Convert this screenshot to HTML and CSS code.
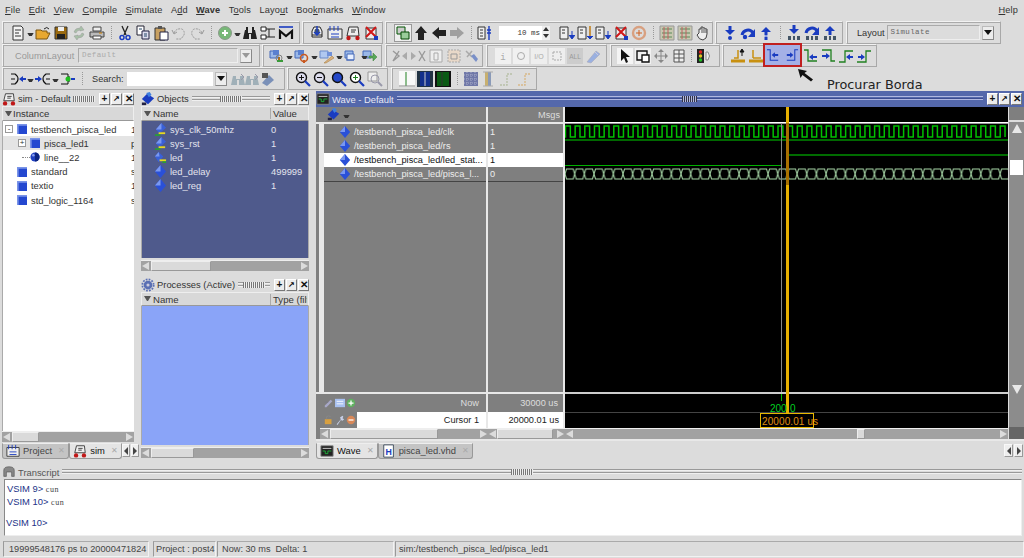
FILE: index.html
```html
<!DOCTYPE html>
<html lang="en">
<head>
    <meta charset="UTF-8">
    <title>ModelSim</title>
    <link rel="stylesheet" href="styles.css">
</head>
<body>
    <svg class="defs" width="0" height="0">
        <defs>
            <symbol id="doc" viewBox="0 0 16 16"><path d="M3 1h8l2 2v12H3z" fill="#f4f4f4" stroke="#333"/><path d="M5 5h6M5 8h4M5 11h6" stroke="#333"/></symbol>
            <symbol id="open" viewBox="0 0 16 16"><path d="M1 5h5l1 1h5v2h3l-3 6H1z" fill="#e8a830" stroke="#7a5410"/><path d="M9 4q3-3 5 0" fill="none" stroke="#222"/></symbol>
            <symbol id="save" viewBox="0 0 16 16"><path d="M2 2h12v12H2z" fill="#9a6a10" stroke="#333"/><path d="M5 2h6v4H5z" fill="#eee"/><path d="M4 9h8v5H4z" fill="#222"/></symbol>
            <symbol id="recycle" viewBox="0 0 16 16"><path d="M3 7q1-4 6-4l1-2 3 4-4 1V5q-3 0-4 3zM13 9q-1 4-6 4l-1 2-3-4 4-1v1q3 0 4-3z" fill="#a8c0a8" stroke="#999" stroke-width=".5"/></symbol>
            <symbol id="print" viewBox="0 0 16 16"><path d="M4 2h8v4H4z" fill="#eee" stroke="#444"/><path d="M1 7h14v5H1z" fill="#bbb" stroke="#444"/><path d="M4 11h8v3H4z" fill="#fff" stroke="#444"/><path d="M10 8h3" stroke="#d08000"/></symbol>
            <symbol id="cut" viewBox="0 0 16 16"><path d="M5 1l4 9M11 1l-4 9" stroke="#222" stroke-width="1.3"/><circle cx="5" cy="12.500" r="2" fill="none" stroke="#1a3cc0" stroke-width="1.500"/><circle cx="11" cy="12.500" r="2" fill="none" stroke="#1a3cc0" stroke-width="1.500"/></symbol>
            <symbol id="copy" viewBox="0 0 16 16"><path d="M2 1h7v9H2z" fill="#fff" stroke="#223"/><path d="M7 6h7v8H7z" fill="#dde" stroke="#224"/><path d="M4 4h3M9 9h3M9 11h3" stroke="#246"/></symbol>
            <symbol id="paste" viewBox="0 0 16 16"><path d="M2 3h10v12H2z" fill="#c8a060" stroke="#333"/><path d="M5 1h4v3H5z" fill="#555"/><path d="M7 7h8v8H7z" fill="#fff" stroke="#224"/></symbol>
            <symbol id="undo" viewBox="0 0 16 16"><path d="M3 8q2-5 8-4 3 2 2 6l-3 4H5" fill="none" stroke="#999" stroke-dasharray="2 1"/><path d="M1 5l2 4 3-2" fill="none" stroke="#999"/></symbol>
            <symbol id="redo" viewBox="0 0 16 16"><path d="M13 8q-2-5-8-4-3 2-2 6l3 4h5" fill="none" stroke="#999" stroke-dasharray="2 1"/><path d="M15 5l-2 4-3-2" fill="none" stroke="#999"/></symbol>
            <symbol id="add" viewBox="0 0 16 16"><circle cx="8" cy="8" r="6.500" fill="#78b878" stroke="#8a9a8a"/><path d="M8 5v6M5 8h6" stroke="#fff" stroke-width="2"/></symbol>
            <symbol id="binoc" viewBox="0 0 16 16"><path d="M1 14l2-9h3v3h4V5h3l2 9H9V9H7v5z" fill="#222"/><path d="M4 2h2v3H4zM10 2h2v3h-2z" fill="#222"/></symbol>
            <symbol id="tree" viewBox="0 0 16 16"><path d="M1 2h5v4H1zM1 10h5v4H1z" fill="#fff" stroke="#222"/><path d="M6 4h9M9 4v8M6 12h9" stroke="#222"/></symbol>
            <symbol id="mbar" viewBox="0 0 16 16"><path d="M1 2h14" stroke="#1a3cc0" stroke-width="1.600"/><path d="M2 14V6l6 5 6-5v8" fill="none" stroke="#111" stroke-width="2.200"/></symbol>
            <symbol id="sim" viewBox="0 0 16 16"><path d="M3 10h10M5 2h6l2 4v6H3V6z" fill="#eee" stroke="#222"/><circle cx="8" cy="6" r="2.500" fill="#456"/><path d="M8 1v9M5 7l3 3 3-3" fill="none" stroke="#1a3cc0" stroke-width="1.400"/></symbol>
            <symbol id="grid" viewBox="0 0 16 16"><path d="M1 4h14v10H1z" fill="#eee" stroke="#333"/><path d="M3 1v5M7 1v5M11 1v5M4 9h8M4 12h8" stroke="#1a3cc0"/></symbol>
            <symbol id="car" viewBox="0 0 16 16"><path d="M4 2h9l1 9H2z" fill="#eee" stroke="#333"/><path d="M6 5h5M6 7h4" stroke="#333"/><circle cx="3.500" cy="13" r="2.200" fill="#c01818"/><circle cx="12.500" cy="13" r="2.200" fill="#c01818"/></symbol>
            <symbol id="xdoc" viewBox="0 0 16 16"><path d="M3 3h10v11H3z" fill="#eee" stroke="#333"/><path d="M3 2l10 10M13 2L3 12" stroke="#d01818" stroke-width="2"/><path d="M11 11h4v4h-4z" fill="#1a3cc0"/></symbol>
            <symbol id="link" viewBox="0 0 16 16"><path d="M2 2h8v7H2z" fill="#ccc" stroke="#050"/><path d="M6 7h8v7H6z" fill="#9c9" stroke="#040"/></symbol>
            <symbol id="up" viewBox="0 0 16 16"><path d="M8 1l6 7h-3v7H5V8H2z" fill="#222"/></symbol>
            <symbol id="left" viewBox="0 0 16 16"><path d="M1 8l7-6v3h7v6H8v3z" fill="#222"/></symbol>
            <symbol id="right" viewBox="0 0 16 16"><path d="M15 8L8 2v3H1v6h7v3z" fill="#a0a0a0"/></symbol>
            <symbol id="ruler" viewBox="0 0 16 16"><path d="M1 2h7v12H1z" fill="#eee" stroke="#333"/><path d="M3 5h3M3 8h3M3 11h3" stroke="#333"/><path d="M12 1v14M10 5h4M10 8h4" stroke="#1a3cc0" stroke-width="1.400"/></symbol>
            <symbol id="rundown" viewBox="0 0 16 16"><path d="M1 2h8v12H1z" fill="#eee" stroke="#333"/><path d="M3 5h3M3 8h3" stroke="#333"/><path d="M13 6v7M10 10l3 4 3-4" fill="#1a3cc0" stroke="#1a3cc0"/></symbol>
            <symbol id="runmid" viewBox="0 0 16 16"><path d="M1 2h8v12H1z" fill="#eee" stroke="#333"/><path d="M3 5h3M3 8h3" stroke="#333"/><path d="M13 1v13" stroke="#c08020" stroke-width="1.600"/><path d="M10 11l3 3 3-3" fill="#1a3cc0" stroke="#1a3cc0"/></symbol>
            <symbol id="stop" viewBox="0 0 16 16"><circle cx="8" cy="8" r="6" fill="none" stroke="#d8a080" stroke-width="2.400"/><path d="M5 8h6M8 5v6" stroke="#d06020"/></symbol>
            <symbol id="wavegrid" viewBox="0 0 16 16"><path d="M1 1h14v14H1z" fill="#c8c8b0" stroke="#999"/><path d="M3 4h10M3 8h10M3 12h10" stroke="#5a8a5a"/><path d="M5 2v12M9 2v12" stroke="#c06060"/></symbol>
            <symbol id="hand" viewBox="0 0 16 16"><path d="M4 8V4h2V2h2v1h2v1h2v5q0 5-4 6-4 0-6-5z" fill="#eee" stroke="#444"/><path d="M7 3v5M9 4v4M11 5v3" stroke="#555"/></symbol>
            <symbol id="stepin" viewBox="0 0 16 16"><path d="M8 1v5" stroke="#1a3cc0" stroke-width="3"/><path d="M3 5h10l-5 5z" fill="#1a3cc0"/><circle cx="8" cy="13" r="2" fill="#1a3cc0"/></symbol>
            <symbol id="stepover" viewBox="0 0 16 16"><path d="M2 10a6 6 0 0 1 11-2" fill="none" stroke="#1a3cc0" stroke-width="3"/><path d="M15 4v8h-7z" fill="#1a3cc0"/><circle cx="5" cy="12" r="2.200" fill="#1a3cc0"/></symbol>
            <symbol id="stepout" viewBox="0 0 16 16"><path d="M8 15V6" stroke="#1a3cc0" stroke-width="3"/><path d="M3 7h10L8 2z" fill="#1a3cc0"/><path d="M6 11h4" stroke="#fff"/></symbol>
            <symbol id="stepinb" viewBox="0 0 16 16"><path d="M8 0v5" stroke="#1a3cc0" stroke-width="3"/><path d="M3 4h10l-5 5z" fill="#1a3cc0"/><path d="M2 11h3v4H2zM7 11h2v4H7zM11 11h3v4h-3z" fill="#456"/></symbol>
            <symbol id="stepoverb" viewBox="0 0 16 16"><path d="M2 8a6 6 0 0 1 11-2" fill="none" stroke="#1a3cc0" stroke-width="3"/><path d="M15 2v8H8z" fill="#1a3cc0"/><path d="M2 11h3v4H2zM7 11h2v4H7zM11 11h3v4h-3z" fill="#456"/></symbol>
            <symbol id="stepoutb" viewBox="0 0 16 16"><path d="M8 10V5" stroke="#1a3cc0" stroke-width="3"/><path d="M3 6h10L8 1z" fill="#1a3cc0"/><path d="M2 11h3v4H2zM7 11h2v4H7zM11 11h3v4h-3z" fill="#456"/></symbol>
            <symbol id="lay1" viewBox="0 0 16 16"><path d="M1 3h8v7H1z" fill="#9ab8e8" stroke="#4468b8"/><path d="M4 2h6v5H4z" fill="#5a80d0"/><path d="M10 9v5" stroke="#a87020" stroke-width="2"/><circle cx="10" cy="10" r="3" fill="none" stroke="#808080"/><path d="M8 13h6" stroke="#3a9a3a" stroke-width="2"/></symbol>
            <symbol id="lay2" viewBox="0 0 16 16"><path d="M1 3h8v7H1z" fill="#9ab8e8" stroke="#4468b8"/><path d="M4 2h6v5H4z" fill="#5a80d0"/><circle cx="10" cy="10" r="3.500" fill="none" stroke="#c85820" stroke-width="1.600"/><path d="M10 12v3" stroke="#c85820" stroke-width="2"/></symbol>
            <symbol id="lay3" viewBox="0 0 16 16"><path d="M1 3h8v7H1z" fill="#b0c8f0" stroke="#6a8ac8"/><path d="M8 4h5v4H8z" fill="#7090d8"/><path d="M5 15l8-7 2 2-8 5z" fill="#d8b080" stroke="#a07838" stroke-width=".5"/></symbol>
            <symbol id="lay4" viewBox="0 0 16 16"><path d="M1 3h8v7H1z" fill="#9ab8e8" stroke="#4468b8"/><path d="M3 6h7v6H3z" fill="#e8f0ff" stroke="#4468b8"/><path d="M2 12h8" stroke="#4468b8"/></symbol>
            <symbol id="lay5" viewBox="0 0 16 16"><path d="M1 3h8v7H1z" fill="#9ab8e8" stroke="#4468b8"/><path d="M7 8h4V5l4 4-4 4v-3H7z" fill="#58a858" stroke="#3a7a3a" stroke-width=".5"/></symbol>
            <symbol id="crossl" viewBox="0 0 16 16"><path d="M1 3l6 5-6 5M7 3L1 13" fill="none" stroke="#999" stroke-width="1.400"/><path d="M15 4l-5 4 5 4z" fill="#aaa"/></symbol>
            <symbol id="crossr" viewBox="0 0 16 16"><path d="M9 3l6 10M15 3L9 13" fill="none" stroke="#999" stroke-width="1.400"/><path d="M1 4l5 4-5 4z" fill="#aaa"/></symbol>
            <symbol id="box1" viewBox="0 0 16 16"><path d="M2 2h12v12H2z" fill="#eee" stroke="#aaa"/><path d="M6 5h4v7H6z" fill="none" stroke="#aaa"/></symbol>
            <symbol id="box2" viewBox="0 0 16 16"><path d="M2 2h12v12H2z" fill="#e8d8c8" stroke="#aaa" stroke-dasharray="2 1"/><path d="M5 6h6v5H5z" fill="none" stroke="#999"/></symbol>
            <symbol id="tool" viewBox="0 0 16 16"><path d="M2 3l6 6M8 3L3 9" stroke="#aaa" stroke-width="1.500"/><path d="M7 8l3-2 4 5-2 3z" fill="#7a90c8"/></symbol>
            <symbol id="btni" viewBox="0 0 16 16"><path d="M0 0h16v16H0z" fill="#f0f0f0"/><text x="8" y="12" font-size="9" text-anchor="middle" fill="#aaa" font-family="Liberation Mono">i</text></symbol>
            <symbol id="btno" viewBox="0 0 16 16"><path d="M0 0h16v16H0z" fill="#f0f0f0"/><circle cx="8" cy="8" r="3.500" fill="none" stroke="#aaa"/></symbol>
            <symbol id="btnio" viewBox="0 0 16 16"><path d="M0 0h16v16H0z" fill="#eee"/><text x="8" y="11" font-size="7" text-anchor="middle" fill="#aaa" font-family="Liberation Sans">I/O</text></symbol>
            <symbol id="btnb" viewBox="0 0 16 16"><path d="M0 0h16v16H0z" fill="#eee"/><path d="M4 4h8v8H4z" fill="none" stroke="#aaa" stroke-dasharray="2 1"/></symbol>
            <symbol id="btnall" viewBox="0 0 16 16"><path d="M0 0h16v16H0z" fill="#ccc"/><text x="8" y="11" font-size="6.500" text-anchor="middle" fill="#999" font-family="Liberation Sans">ALL</text></symbol>
            <symbol id="pen" viewBox="0 0 16 16"><path d="M2 14l9-11 4 3-9 9z" fill="#9ab0e0" stroke="#aab" stroke-width=".6"/><path d="M10 4l3 3" stroke="#ccd"/></symbol>
            <symbol id="cursor" viewBox="0 0 16 16"><path d="M0 0h16v16H0z" fill="#f4f4f4"/><path d="M4 1v12l3-3 2 5 2-1-2-5h4z" fill="#111"/></symbol>
            <symbol id="zoombox" viewBox="0 0 16 16"><path d="M0 0h16v16H0z" fill="#f0f0f0"/><path d="M2 3h10v9H2z" fill="none" stroke="#111" stroke-width="1.400"/><path d="M7 7h7v7H7z" fill="#fff" stroke="#111" stroke-width="1.400"/></symbol>
            <symbol id="move" viewBox="0 0 16 16"><path d="M8 1l3 3H5zM8 15l-3-3h6zM1 8l3-3v6zM15 8l-3 3V5z" fill="#888"/><path d="M3 8h10M8 3v10" stroke="#888"/></symbol>
            <symbol id="cols" viewBox="0 0 16 16"><path d="M3 2h10v12H3z" fill="#eee" stroke="#555"/><path d="M8 2v12M3 6h10M3 10h10" stroke="#555"/></symbol>
            <symbol id="traffic" viewBox="0 0 16 16"><path d="M1 1h7v14H1z" fill="#222"/><circle cx="4.500" cy="4" r="1.700" fill="#e02020"/><circle cx="4.500" cy="8" r="1.700" fill="#e0c020"/><circle cx="4.500" cy="12" r="1.700" fill="#20c020"/><path d="M10 4h2q3 4 0 8h-2z" fill="#eee" stroke="#888"/></symbol>
            <symbol id="edgeupl" viewBox="0 0 16 16"><path d="M1 13h14" stroke="#c89010" stroke-width="3"/><path d="M4 10h4V2" fill="none" stroke="#c89010" stroke-width="1.500"/><path d="M12 1l-2 3h4zM12 4v4" fill="#111" stroke="#111"/></symbol>
            <symbol id="edgedn" viewBox="0 0 16 16"><path d="M1 13h14" stroke="#c89010" stroke-width="3"/><path d="M5 10V2M5 10h8" fill="none" stroke="#c89010" stroke-width="1.500"/></symbol>
            <symbol id="findl" viewBox="0 0 16 16"><path d="M1 2.500h3.500v11H13" fill="none" stroke="#1a3cc0" stroke-width="1.100"/><path d="M6 8l3.500-3v2H13v2H9.500v2z" fill="#1a3cc0"/></symbol>
            <symbol id="findr" viewBox="0 0 16 16"><path d="M15 2.500h-3.500v11H3" fill="none" stroke="#1a3cc0" stroke-width="1.100"/><path d="M10 8L6.500 5v2H3v2h3.500v2z" fill="#1a3cc0"/></symbol>
            <symbol id="gfall" viewBox="0 0 16 16"><path d="M2 2h4v11h9" fill="none" stroke="#208020" stroke-width="1.300"/><path d="M7 9l4-3v2h4v2h-4v2z" fill="#1a3cc0"/></symbol>
            <symbol id="grise" viewBox="0 0 16 16"><path d="M2 2h9v11h4" fill="none" stroke="#208020" stroke-width="1.300"/><path d="M10 8L6 5v2H2v2h4v2z" fill="#1a3cc0"/></symbol>
            <symbol id="grise2" viewBox="0 0 16 16"><path d="M1 14h6V3h8" fill="none" stroke="#208020" stroke-width="1.300"/><path d="M8 9l4-3v2h3v2h-3v2z" fill="#1a3cc0"/></symbol>
            <symbol id="grise3" viewBox="0 0 16 16"><path d="M1 14h9V3h5" fill="none" stroke="#208020" stroke-width="1.300"/><path d="M9 9L5 6v2H2v2h3v2z" fill="#1a3cc0"/></symbol>
            <symbol id="addin" viewBox="0 0 16 16"><path d="M1 3h4q3 2 3 5t-3 5H1M5 8H1" fill="none" stroke="#111" stroke-width="1.200"/><path d="M9 8l4-3v2h3v2h-3v2z" fill="#1a3cc0"/></symbol>
            <symbol id="addout" viewBox="0 0 16 16"><path d="M15 3h-4q-3 2-3 5t3 5h4M11 8h4" fill="none" stroke="#111" stroke-width="1.200"/><path d="M7 8L3 5v2H0v2h3v2z" fill="#1a3cc0"/></symbol>
            <symbol id="addgate" viewBox="0 0 16 16"><path d="M1 3h7v10H1M8 6h2M8 10h2" fill="none" stroke="#111"/><circle cx="8" cy="8" r="2.500" fill="#20c020"/><path d="M11 8h4" stroke="#1a3cc0" stroke-width="2"/></symbol>
            <symbol id="binocg" viewBox="0 0 16 16"><path d="M1 14l2-9h3v3h4V5h3l2 9H9V9H7v5z" fill="#a0b0b8"/><path d="M11 3l3 3-3 3" fill="none" stroke="#99a"/></symbol>
            <symbol id="binoct" viewBox="0 0 16 16"><path d="M2 12l7-8 5 5-7 6z" fill="#7a90b8"/><path d="M2 2h6v5H2z" fill="#555"/></symbol>
            <symbol id="zoomin" viewBox="0 0 16 16"><circle cx="6.500" cy="6.500" r="5" fill="#dde" stroke="#111" stroke-width="1.400"/><path d="M10 10l5 5" stroke="#1a3cc0" stroke-width="2.200"/><path d="M4 6.500h5M6.500 4v5" stroke="#111"/></symbol>
            <symbol id="zoomout" viewBox="0 0 16 16"><circle cx="6.500" cy="6.500" r="5" fill="#dde" stroke="#111" stroke-width="1.400"/><path d="M10 10l5 5" stroke="#1a3cc0" stroke-width="2.200"/><path d="M4 6.500h5" stroke="#111"/></symbol>
            <symbol id="zoomfull" viewBox="0 0 16 16"><circle cx="6.500" cy="6.500" r="5" fill="#2448c8" stroke="#111" stroke-width="1.400"/><path d="M10 10l5 5" stroke="#1a3cc0" stroke-width="2.200"/></symbol>
            <symbol id="zoomgreen" viewBox="0 0 16 16"><circle cx="6.500" cy="6.500" r="5" fill="#fff" stroke="#111" stroke-width="1.400"/><path d="M10 10l5 5" stroke="#1a3cc0" stroke-width="2.200"/><path d="M4 6.500h5M6.500 4v5" stroke="#208020"/></symbol>
            <symbol id="zoomgrey" viewBox="0 0 16 16"><path d="M1 1h9v9H1z" fill="#eee" stroke="#999"/><circle cx="8" cy="8" r="4" fill="none" stroke="#99a"/><path d="M11 11l4 4" stroke="#99a" stroke-width="2"/></symbol>
            <symbol id="panew" viewBox="0 0 16 16"><path d="M0 0h16v16H0z" fill="#f8f8f8"/><path d="M7 1v14" stroke="#208020"/><path d="M0 15h16" stroke="#888"/></symbol>
            <symbol id="paneb" viewBox="0 0 16 16"><path d="M0 0h16v16H0z" fill="#234"/><path d="M3 1h10v14H3z" fill="#14308c"/><path d="M8 1v14" stroke="#ccc"/></symbol>
            <symbol id="paneg" viewBox="0 0 16 16"><path d="M0 0h16v16H0z" fill="#111"/><path d="M2 1h12v14H2z" fill="#0a5a14"/><path d="M7 1v14" stroke="#333"/></symbol>
            <symbol id="dither" viewBox="0 0 16 16"><path d="M1 1h14v14H1z" fill="#7078a8"/><path d="M1 4h14M1 8h14M1 12h14M4 1v14M8 1v14M12 1v14" stroke="#a8acc8" stroke-dasharray="1 1"/></symbol>
            <symbol id="wedge1" viewBox="0 0 16 16"><path d="M4 1h3v14H4z" fill="#c8b070"/><path d="M7 1h3v14H7z" fill="#8a9ab8"/><path d="M2 1h10M2 15h10" stroke="#aaa"/></symbol>
            <symbol id="wedge2" viewBox="0 0 16 16"><path d="M1 14h7V3h6" fill="none" stroke="#b8c0a8" stroke-dasharray="2 1" stroke-width="1.400"/></symbol>
            <symbol id="wedge3" viewBox="0 0 16 16"><path d="M1 14h7V3h6" fill="none" stroke="#d8b888" stroke-dasharray="2 1" stroke-width="1.400"/></symbol>
            <symbol id="simhead" viewBox="0 0 16 16"><path d="M4 2h9l1 8H2z" fill="#eee" stroke="#333"/><path d="M6 5h5M6 7h4" stroke="#333"/><circle cx="3.500" cy="13" r="2.500" fill="#c01818"/><circle cx="12.500" cy="13" r="2.500" fill="#c01818"/></symbol>
            <symbol id="objhead" viewBox="0 0 16 16"><path d="M1 8l6-6 8 5-7 7z" fill="#1a3cc0"/><path d="M6 1l4-1 2 3-3 3z" fill="#4080e0"/><path d="M1 12h5v3H1z" fill="#224"/></symbol>
            <symbol id="gear" viewBox="0 0 16 16"><circle cx="8" cy="8" r="5" fill="#5a6fb4"/><circle cx="8" cy="8" r="6.500" fill="none" stroke="#5a6fb4" stroke-width="2" stroke-dasharray="2 1.400"/><circle cx="8" cy="8" r="1.800" fill="#ccd"/></symbol>
            <symbol id="wavehead" viewBox="0 0 16 16"><path d="M1 2h14v12H1z" fill="#222" stroke="#888"/><path d="M3 5h10" stroke="#ddd"/><path d="M3 8h3v3h3V8h4" fill="none" stroke="#1eb83a"/></symbol>
            <symbol id="vhd" viewBox="0 0 16 16"><path d="M2 1h11v14H2z" fill="#fff" stroke="#345"/><text x="7.500" y="12" font-size="10" text-anchor="middle" font-weight="bold" fill="#1a3cc0" font-family="Liberation Sans">H</text></symbol>
            <symbol id="chat" viewBox="0 0 16 16"><path d="M2 13V6q0-4 6-4t6 4v7h-3V8H5v5z" fill="#888" stroke="#444" stroke-width=".6"/></symbol>
            <symbol id="inst" viewBox="0 0 12 12"><path d="M0 0h12v12H0z" fill="#2448d0"/><path d="M0 0h12v2H2v10H0z" fill="#7a94e8"/></symbol>
            <symbol id="ball" viewBox="0 0 12 12"><circle cx="6" cy="6" r="5.500" fill="#2040c0"/><path d="M6 .5a5.500 5.500 0 0 1 0 11" fill="#0c2480"/><circle cx="4" cy="4" r="1.500" fill="#8aa0f0"/></symbol>
            <symbol id="dia" viewBox="0 0 14 14"><path d="M7 0l6 7-6 7-6-7z" fill="#2a50d8"/><path d="M7 0L1 7h6z" fill="#7a98f0"/></symbol>
            <symbol id="diaio" viewBox="0 0 14 14"><path d="M8 0l5 5-7 6-4-4z" fill="#3a60d8"/><path d="M8 0L2 7h6z" fill="#7a98f0"/><path d="M5 11h7" stroke="#e8d820" stroke-width="2"/><path d="M1 13h6" stroke="#20b020" stroke-width="1.500"/></symbol>
            <symbol id="diaout" viewBox="0 0 14 14"><path d="M5 1l5 5-5 6-4-6z" fill="#3a60d8"/><path d="M5 1L1 6h5z" fill="#7a98f0"/><path d="M6 10h7" stroke="#e8d820" stroke-width="2"/><path d="M9 12h4" stroke="#20b020" stroke-width="1.500"/></symbol>
            <symbol id="lock" viewBox="0 0 12 12"><path d="M1 5h8v6H1z" fill="#d8a040"/><path d="M3 5V2q3-2 5 0" fill="none" stroke="#888"/></symbol>
            <symbol id="wrench" viewBox="0 0 12 12"><path d="M2 11l5-6-1-2 3-2 1 1-1 2 2 1-2 2-2-1-4 6z" fill="#c8d0e8"/></symbol>
            <symbol id="minus" viewBox="0 0 12 12"><circle cx="6" cy="6" r="5" fill="#d88858"/><path d="M3 6h6" stroke="#fff" stroke-width="1.500"/></symbol>
            <symbol id="edit" viewBox="0 0 12 12"><path d="M1 9l7-7 2 2-7 7H1z" fill="#a8a8c8"/><path d="M1 5h4" stroke="#778"/></symbol>
            <symbol id="window" viewBox="0 0 12 12"><path d="M0 1h12v10H0z" fill="#a8c0f0"/><path d="M2 4h8M2 7h8" stroke="#fff"/></symbol>
            <symbol id="plusc" viewBox="0 0 12 12"><circle cx="6" cy="6" r="5" fill="#60b060"/><path d="M3 6h6M6 3v6" stroke="#fff" stroke-width="1.500"/></symbol>
        </defs>
    </svg>

    <div class="menubar">
        <span><u>F</u>ile</span>
        <span><u>E</u>dit</span>
        <span><u>V</u>iew</span>
        <span><u>C</u>ompile</span>
        <span><u>S</u>imulate</span>
        <span>A<u>d</u>d</span>
        <span class="menu-current"><u>W</u>ave</span>
        <span>T<u>o</u>ols</span>
        <span>Layo<u>u</u>t</span>
        <span>Boo<u>k</u>marks</span>
        <span><u>W</u>indow</span>
        <span class="menu-help"><u>H</u>elp</span>
    </div>

    <div class="toolrow">
        <div class="group g-file">
            <svg class="ic"><use href="#doc"/></svg><i class="drop"></i>
            <svg class="ic"><use href="#open"/></svg>
            <svg class="ic"><use href="#save"/></svg>
            <svg class="ic"><use href="#recycle"/></svg>
            <svg class="ic"><use href="#print"/></svg>
            <i class="sep"></i>
            <svg class="ic"><use href="#cut"/></svg>
            <svg class="ic"><use href="#copy"/></svg>
            <svg class="ic"><use href="#paste"/></svg>
            <svg class="ic"><use href="#undo"/></svg>
            <svg class="ic"><use href="#redo"/></svg>
            <i class="sep"></i>
            <svg class="ic"><use href="#add"/></svg><i class="drop"></i>
            <svg class="ic"><use href="#binoc"/></svg>
            <svg class="ic"><use href="#tree"/></svg>
            <svg class="ic"><use href="#mbar"/></svg>
        </div>
        <div class="group g-sim">
            <svg class="ic"><use href="#sim"/></svg>
            <svg class="ic"><use href="#grid"/></svg>
            <svg class="ic"><use href="#car"/></svg>
            <svg class="ic"><use href="#xdoc"/></svg>
        </div>
        <div class="group g-run">
            <svg class="ic pressed"><use href="#link"/></svg>
            <svg class="ic"><use href="#up"/></svg>
            <svg class="ic"><use href="#left"/></svg>
            <svg class="ic"><use href="#right"/></svg>
            <i class="sep"></i>
            <svg class="ic"><use href="#ruler"/></svg>
            <span class="runlen">10 ms</span>
            <span class="spin"><i></i><i></i></span>
            <svg class="ic"><use href="#rundown"/></svg>
            <svg class="ic"><use href="#runmid"/></svg>
            <svg class="ic"><use href="#rundown"/></svg>
            <svg class="ic"><use href="#xdoc"/></svg>
            <svg class="ic"><use href="#stop"/></svg>
            <i class="sep"></i>
            <svg class="ic"><use href="#wavegrid"/></svg>
            <svg class="ic"><use href="#wavegrid"/></svg>
            <svg class="ic"><use href="#hand"/></svg>
        </div>
        <div class="group g-step">
            <svg class="ic"><use href="#stepin"/></svg>
            <svg class="ic"><use href="#stepover"/></svg>
            <svg class="ic"><use href="#stepout"/></svg>
            <i class="sep"></i>
            <svg class="ic"><use href="#stepinb"/></svg>
            <svg class="ic"><use href="#stepoverb"/></svg>
            <svg class="ic"><use href="#stepoutb"/></svg>
        </div>
        <div class="group g-layout">
            <span class="tlabel">Layout</span>
            <span class="combo combo-sim">Simulate</span>
            <span class="combo-btn"><i></i></span>
        </div>
    </div>

    <div class="toolrow">
        <div class="group g-column">
            <span class="tlabel muted col-label">ColumnLayout</span>
            <span class="combo combo-col">Default</span>
            <span class="combo-btn off"><i></i></span>
        </div>
        <div class="group g-lay">
            <svg class="ic"><use href="#lay1"/></svg><i class="drop"></i>
            <svg class="ic"><use href="#lay2"/></svg><i class="drop"></i>
            <svg class="ic"><use href="#lay3"/></svg><i class="drop"></i>
            <svg class="ic"><use href="#lay4"/></svg><i class="drop drop-tight"></i>
            <svg class="ic"><use href="#lay5"/></svg>
        </div>
        <div class="group g-cross">
            <svg class="ic"><use href="#crossl"/></svg>
            <svg class="ic"><use href="#crossr"/></svg>
            <svg class="ic"><use href="#box1"/></svg>
            <svg class="ic"><use href="#box2"/></svg>
            <svg class="ic"><use href="#tool"/></svg>
        </div>
        <div class="group g-filter">
            <svg class="ic"><use href="#btni"/></svg>
            <svg class="ic"><use href="#btno"/></svg>
            <svg class="ic"><use href="#btnio"/></svg>
            <svg class="ic"><use href="#btnb"/></svg>
            <svg class="ic"><use href="#btnall"/></svg>
            <svg class="ic"><use href="#pen"/></svg>
        </div>
        <div class="group g-mouse">
            <svg class="ic"><use href="#cursor"/></svg>
            <svg class="ic"><use href="#zoombox"/></svg>
            <svg class="ic"><use href="#move"/></svg>
            <svg class="ic"><use href="#cols"/></svg>
            <i class="sep sep-small"></i>
            <svg class="ic"><use href="#traffic"/></svg>
        </div>
        <div class="group g-edge">
            <svg class="ic"><use href="#edgeupl"/></svg>
            <svg class="ic"><use href="#edgedn"/></svg>
            <div class="hilite">
                <svg class="ic"><use href="#findl"/></svg>
                <svg class="ic"><use href="#findr"/></svg>
            </div>
            <svg class="ic"><use href="#gfall"/></svg>
            <svg class="ic"><use href="#grise"/></svg>
            <svg class="ic"><use href="#grise2"/></svg>
            <svg class="ic"><use href="#grise3"/></svg>
        </div>
    </div>

    <div class="toolrow">
        <div class="group g-search">
            <svg class="ic"><use href="#addin"/></svg><i class="drop"></i>
            <svg class="ic"><use href="#addout"/></svg><i class="drop"></i>
            <svg class="ic"><use href="#addgate"/></svg>
            <i class="sep"></i>
            <span class="tlabel search-label">Search:</span>
            <span class="search-box"></span>
            <span class="combo-btn"><i></i></span>
            <svg class="ic tight first"><use href="#binocg"/></svg>
            <svg class="ic tight"><use href="#binocg"/></svg>
            <svg class="ic"><use href="#binoct"/></svg>
        </div>
        <div class="group g-zoom">
            <svg class="ic"><use href="#zoomin"/></svg>
            <svg class="ic"><use href="#zoomout"/></svg>
            <svg class="ic"><use href="#zoomfull"/></svg>
            <svg class="ic"><use href="#zoomgreen"/></svg>
            <svg class="ic"><use href="#zoomgrey"/></svg>
        </div>
        <div class="group g-panes">
            <svg class="ic"><use href="#panew"/></svg>
            <svg class="ic"><use href="#paneb"/></svg>
            <svg class="ic"><use href="#paneg"/></svg>
            <i class="sep"></i>
            <svg class="ic"><use href="#dither"/></svg>
            <svg class="ic"><use href="#wedge1"/></svg>
            <svg class="ic"><use href="#wedge2"/></svg>
            <svg class="ic"><use href="#wedge3"/></svg>
        </div>
    </div>

    <div class="main">
        <div class="col-left">
            <div class="pane-title">
                <svg class="head-ic"><use href="#simhead"/></svg>
                <span>sim - Default</span>
                <i class="grip"></i>
                <span class="winbtn">+</span><span class="winbtn small">&#8599;</span><span class="winbtn">&#10005;</span>
            </div>
            <div class="col-head">
                <i class="sortbtn"></i><span class="h-instance">Instance</span>
            </div>
            <div class="tree">
                <div class="tree-row"><i class="expander">-</i><svg class="tic"><use href="#inst"/></svg><span>testbench_pisca_led</span><b>1</b></div>
                <div class="tree-row sel lvl1"><i class="expander">+</i><svg class="tic"><use href="#inst"/></svg><span>pisca_led1</span><b>p</b></div>
                <div class="tree-row lvl2"><i class="elbow"></i><svg class="tic"><use href="#ball"/></svg><span>line__22</span><b>1</b></div>
                <div class="tree-row root"><svg class="tic"><use href="#inst"/></svg><span>standard</span><b>s</b></div>
                <div class="tree-row root"><svg class="tic"><use href="#inst"/></svg><span>textio</span><b>1</b></div>
                <div class="tree-row root"><svg class="tic"><use href="#inst"/></svg><span>std_logic_1164</span><b>s</b></div>
            </div>
            <div class="hscroll hs-left"><i class="arrow-l"></i><i class="thumb"></i><i class="track"></i><i class="arrow-r"></i></div>
            <div class="tabs">
                <span class="tab"><svg class="tab-ic"><use href="#grid"/></svg>Project <em>&#10005;</em></span>
                <span class="tab on"><svg class="tab-ic"><use href="#simhead"/></svg>sim <em>&#10005;</em></span>
                <span class="tab-arrows"><b class="tab-btn"><i class="arrow-l dark"></i></b><b class="tab-btn"><i class="arrow-r dark"></i></b></span>
            </div>
        </div>

        <div class="col-mid">
            <div class="pane-title">
                <svg class="head-ic"><use href="#objhead"/></svg>
                <span>Objects</span>
                <i class="grip"></i>
                <span class="winbtn">+</span><span class="winbtn small">&#8599;</span><span class="winbtn">&#10005;</span>
            </div>
            <div class="col-head">
                <i class="sortbtn"></i><span class="h-name">Name</span><span class="h-value">Value</span>
            </div>
            <div class="objects">
                <div class="obj-row"><svg class="oic"><use href="#diaio"/></svg><span>sys_clk_50mhz</span><b>0</b></div>
                <div class="obj-row"><svg class="oic"><use href="#diaio"/></svg><span>sys_rst</span><b>1</b></div>
                <div class="obj-row"><svg class="oic"><use href="#diaout"/></svg><span>led</span><b>1</b></div>
                <div class="obj-row"><svg class="oic"><use href="#dia"/></svg><span>led_delay</span><b>499999</b></div>
                <div class="obj-row"><svg class="oic"><use href="#dia"/></svg><span>led_reg</span><b>1</b></div>
            </div>
            <div class="hscroll hs-obj"><i class="arrow-l"></i><i class="thumb"></i><i class="track"></i><i class="arrow-r"></i></div>

            <div class="pane-title proc-title">
                <svg class="head-ic"><use href="#gear"/></svg>
                <span>Processes (Active)</span>
                <i class="grip"></i>
                <span class="winbtn">+</span><span class="winbtn small">&#8599;</span><span class="winbtn">&#10005;</span>
            </div>
            <div class="col-head proc-head">
                <i class="sortbtn"></i><span class="h-name">Name</span><span class="h-type">Type (filt</span>
            </div>
            <div class="processes"></div>
            <div class="hscroll hs-proc"><i class="arrow-l"></i><i class="thumb"></i><i class="track"></i><i class="arrow-r"></i></div>
        </div>

        <div class="col-wave">
            <div class="wave-title">
                <svg class="head-ic"><use href="#wavehead"/></svg>
                <span>Wave - Default</span>
                <i class="grip"></i>
                <span class="winbtn">+</span><span class="winbtn small">&#8599;</span><span class="winbtn">&#10005;</span>
            </div>
            <div class="wave-grid">
                <div class="w-head">
                    <svg class="oic wave-sel"><use href="#objhead"/></svg><i class="drop"></i>
                </div>
                <div class="w-head w-msgs">Msgs</div>
                <svg class="wave-canvas" width="443" height="321">
                    <defs>
                        <pattern id="bus" width="9.67" height="12" patternUnits="userSpaceOnUse" y="61.500">
                            <path d="M0 5.500L1.500 .5H8.170L9.670 5.500L8.170 10.500H1.500Z" fill="none" stroke="#a8d8a8"/>
                        </pattern>
                    </defs>
                    <path d="M0 15.500H443" stroke="#fff"/>
                    <path d="M0 16.500H443" stroke="#999"/>
                    <path class="clk" d="M0 30H.5V19h4.830V30h4.830V19h4.830V30h4.830V19h4.830V30h4.830V19h4.830V30h4.830V19h4.830V30h4.830V19h4.830V30h4.830V19h4.830V30h4.830V19h4.830V30h4.830V19h4.830V30h4.830V19h4.830V30h4.830V19h4.830V30h4.830V19h4.830V30h4.830V19h4.830V30h4.830V19h4.830V30h4.830V19h4.830V30h4.830V19h4.830V30h4.830V19h4.830V30h4.830V19h4.830V30h4.830V19h4.830V30h4.830V19h4.830V30h4.830V19h4.830V30h4.830V19h4.830V30h4.830V19h4.830V30h4.830V19h4.830V30h4.830V19h4.830V30h4.830V19h4.830V30h4.830V19h4.830V30h4.830V19h4.830V30h4.830V19h4.830V30h4.830V19h4.830V30h4.830V19h4.830V30h4.830V19h4.830V30h4.830V19h4.830V30h4.830V19h4.830V30h4.830V19h4.830V30h4.830V19h4.830V30h4.830V19h4.830V30h4.830V19h4.830V30h4.830V19h4.830V30h4.830V19h4.830V30h4.830V19h4.830V30h4.830V19h4.830V30h4.830V19h4.830V30h4.830V19h4.830V30h4.830V19h4.830V30h4.830V19h4.830V30"/>
                    <path d="M0 33H443" stroke="#00d000" stroke-width="1"/>
                    <path d="M0 58.500H216" stroke="#00b000"/>
                    <path d="M222 48H443" stroke="#009000" stroke-width="1.500"/>
                    <rect y="61" width="443" height="12" fill="url(#bus)"/>
                    <path d="M216.500 16V293" stroke="#888"/>
                    <path d="M216.500 287V294" stroke="#00c000"/>
                    <path d="M0 286H443" stroke="#ccc" stroke-width="2"/>
                    <path d="M0 305.500H443" stroke="#444"/>
                    <path d="M222.500 0V321" stroke="#e8b000" stroke-width="3"/>
                    <path d="M222.500 16V78" stroke="#a87000" stroke-width="3"/>
                    <text class="wave-num" x="205" y="305">200</text>
                    <text class="wave-num" x="225" y="305">0</text>
                    <rect x="195.500" y="306.500" width="53" height="14" fill="#000" stroke="#e8b800"/>
                    <text class="wave-cur" x="197" y="318">20000.01 us</text>
                </svg>
                <div class="v-scroll">
                    <i class="v-top"></i>
                    <i class="v-up"></i>
                    <i class="v-thumb"></i>
                    <i class="v-down"></i>
                    <i class="v-bottom"></i>
                </div>

                <div class="w-names">
                    <div class="w-row"><svg class="wdia"><use href="#dia"/></svg>/testbench_pisca_led/clk</div>
                    <div class="w-row"><svg class="wdia"><use href="#dia"/></svg>/testbench_pisca_led/rs</div>
                    <div class="w-row sel"><svg class="wdia"><use href="#dia"/></svg>/testbench_pisca_led/led_stat...</div>
                    <div class="w-row last"><svg class="wdia"><use href="#dia"/></svg>/testbench_pisca_led/pisca_l...</div>
                </div>
                <div class="w-values">
                    <div class="w-row">1</div>
                    <div class="w-row">1</div>
                    <div class="w-row sel">1</div>
                    <div class="w-row last">0</div>
                </div>

                <div class="w-now">
                    <svg class="mini"><use href="#edit"/></svg><svg class="mini"><use href="#window"/></svg><svg class="mini"><use href="#plusc"/></svg>
                    <span>Now</span>
                </div>
                <div class="w-now w-val"><span>30000 us</span></div>

                <div class="w-cursor">
                    <svg class="mini"><use href="#lock"/></svg><svg class="mini"><use href="#wrench"/></svg><svg class="mini"><use href="#minus"/></svg>
                    <span class="cursor-name">Cursor 1</span>
                </div>
                <div class="w-cursor w-val"><span class="cursor-name">20000.01 us</span></div>

                <div class="hscroll hs-names"><i class="arrow-l"></i><i class="thumb"></i><i class="track"></i><i class="arrow-r"></i></div>
                <div class="hscroll hs-vals"><i class="arrow-l"></i><i class="thumb"></i><i class="track"></i><i class="arrow-r"></i></div>
                <div class="hscroll hs-wave"><i class="arrow-l"></i><i class="track"></i><i class="thumb"></i><i class="track tail"></i><i class="arrow-r"></i></div>
            </div>
            <div class="tabs wave-tabs">
                <span class="tab on"><svg class="tab-ic"><use href="#wavehead"/></svg>Wave <em>&#10005;</em></span>
                <span class="tab"><svg class="tab-ic"><use href="#vhd"/></svg>pisca_led.vhd <em>&#10005;</em></span>
                <span class="tab-arrows far"><b class="tab-btn"><i class="arrow-l dark"></i></b><b class="tab-btn"><i class="arrow-r dark"></i></b></span>
            </div>
        </div>
    </div>

    <div class="transcript">
        <div class="trans-title">
            <svg class="head-ic"><use href="#chat"/></svg>
            <span>Transcript</span>
            <i class="grip"></i>
        </div>
        <div class="trans-body">
            <p>VSIM 9&gt; <code>cun</code></p>
            <p>VSIM 10&gt; <code>cun</code></p>
            <p class="prompt">VSIM 10&gt;</p>
        </div>
    </div>

    <div class="statusbar">
        <span class="st-range">19999548176 ps to 20000471824</span>
        <span class="st-project">Project : post4</span>
        <span class="st-now">Now: 30 ms &nbsp;Delta: 1</span>
        <span class="st-path">sim:/testbench_pisca_led/pisca_led1</span>
    </div>

    <!-- annotation drawn over the screenshot -->
    <svg class="note-arrow" width="16" height="13"><path d="M0 0L9 2 6.500 4 15 10.500 13 12.500 4.500 6 2.500 9z" fill="#111"/></svg>
    <div class="note">Procurar Borda</div>
</body>
</html>
```

FILE: styles.css
```css
*{
    margin: 0;
    padding: 0;
    box-sizing: border-box;
}
html, body{
    width: 1024px;
    height: 558px;
    overflow: hidden;
}
body{
    position: relative;
    background-color: #dcdcdc;
    color: #333;
    font-family: "Liberation Sans", Arial, sans-serif;
    font-size: 9.2px;
}
i, em, b{
    font-style: normal;
    font-weight: normal;
}
.defs{
    position: absolute;
}

/* menu */
.menubar{
    display: flex;
    height: 21px;
    align-items: center;
    padding: 0 0 1px 5px;
    gap: 8.4px;
    font-size: 9.2px;
    letter-spacing: .15px;
}
.menu-current{
    font-weight: bold;
}
.menu-help{
    margin-left: auto;
    margin-right: 6px;
}

/* toolbars */
.toolrow{
    display: flex;
    height: 23px;
}
.group{
    display: flex;
    align-items: center;
    height: 23px;
    margin-left: 2px;
    border: 1px solid #a8a8a8;
    border-left-color: #f2f2f2;
    border-top-color: #f2f2f2;
    box-shadow: inset 1px 1px 0 #aaa;
    flex-shrink: 0;
}
.ic{
    width: 16px;
    height: 16px;
    margin: 0 1px;
    flex-shrink: 0;
}
.ic.tight{
    margin: 0 -1px;
}
.ic.first{
    margin-left: 3px;
}
.ic.pressed{
    background-color: #eee;
    outline: 1px solid #999;
}
.drop{
    width: 7px;
    height: 3px;
    flex-shrink: 0;
    border-top: 3px solid #333;
    border-left: 2px solid transparent;
    border-right: 2px solid transparent;
    margin-top: 3px;
    background-clip: padding-box;
    transform: scaleX(.9);
}
.drop-tight{
    margin-right: -7px;
}
.sep{
    width: 10px;
    height: 14px;
    flex-shrink: 0;
    background: linear-gradient(#999 50%, transparent 50%) center / 1px 2px repeat-y;
}
.sep-small{
    width: 7px;
}
.tlabel{
    color: #333;
    white-space: nowrap;
}
.muted{
    color: #999;
}
.col-label{
    width: 63px;
}
.combo{
    height: 15px;
    border: 1px solid #aaa;
    border-right-color: #eee;
    border-bottom-color: #eee;
    font-family: "Liberation Mono", monospace;
    font-size: 7.5px;
    line-height: 13px;
    padding-left: 3px;
    letter-spacing: .4px;
    color: #666;
    flex-shrink: 0;
}
.combo-col{
    width: 160px;
    color: #aaa;
}
.combo-sim{
    width: 93px;
    margin-left: 2px;
}
.combo-btn{
    width: 12px;
    height: 14px;
    margin-left: 2px;
    background-color: #ececec;
    border: 1px solid #bbb;
    border-right-color: #888;
    border-bottom-color: #888;
    display: flex;
    align-items: center;
    justify-content: center;
    flex-shrink: 0;
}
.combo-btn i{
    border-top: 5px solid #111;
    border-left: 4px solid transparent;
    border-right: 4px solid transparent;
}
.combo-btn.off i{
    border-top-color: #999;
}
.runlen{
    width: 43px;
    height: 14px;
    margin-left: 5px;
    background-color: #fff;
    text-align: right;
    padding-right: 2px;
    font-family: "Liberation Mono", monospace;
    font-size: 7.5px;
    line-height: 14px;
    flex-shrink: 0;
}
.spin{
    width: 8px;
    height: 14px;
    margin-right: 8px;
    display: flex;
    flex-direction: column;
    justify-content: space-around;
    align-items: center;
    background-color: #eee;
    flex-shrink: 0;
}
.spin i:first-child{
    border-bottom: 4px solid #333;
    border-left: 3px solid transparent;
    border-right: 3px solid transparent;
}
.spin i:last-child{
    border-top: 4px solid #333;
    border-left: 3px solid transparent;
    border-right: 3px solid transparent;
}
.search-box{
    width: 86px;
    height: 14px;
    margin-left: 5px;
    background-color: #fff;
    flex-shrink: 0;
}
.search-label{
    width: 30px;
    margin-left: 5px;
}
.hilite{
    display: flex;
    align-items: center;
    justify-content: space-between;
    width: 39px;
    height: 24px;
    margin: -1px -1px 0 -2px;
    padding: 0 1px;
    background-color: #a4b0e6;
    border: 2px solid #c02020;
    flex-shrink: 0;
}
.hilite .ic{
    width: 15px;
    margin: 0;
}
.g-file{ width: 298px; padding-left: 6px; }
.g-sim{ width: 81px; padding-left: 5px; }
.g-run{ width: 328px; padding-left: 8px; }
.g-step{ width: 128px; padding-left: 5px; }
.g-layout{ width: 155px; margin-left: 3px; padding-left: 10px; }
.g-column{ width: 258px; padding-left: 12px; }
.g-lay{ width: 120px; padding-left: 5px; }
.g-cross{ width: 98px; margin-left: 3px; padding-left: 5px; }
.g-filter{ width: 121px; margin-left: 3px; padding-left: 7px; }
.g-mouse{ width: 110px; margin-left: 3px; padding-left: 5px; }
.g-edge{ width: 155px; padding-left: 6px; }
.g-search{ width: 283px; padding-left: 6px; }
.g-zoom{ width: 101px; padding-left: 6px; }
.g-panes{ width: 146px; margin-left: 3px; padding-left: 6px; }

/* panes */
.main{
    display: flex;
    height: 373px;
    padding-top: 1px;
}
.col-left{
    width: 132px;
    margin-left: 2px;
    margin-right: 7px;
    flex-shrink: 0;
}
.col-mid{
    width: 168px;
    margin-right: 7px;
    flex-shrink: 0;
}
.col-wave{
    width: 708px;
    flex-shrink: 0;
}
.pane-title{
    display: flex;
    align-items: center;
    height: 15px;
    white-space: nowrap;
    color: #333;
    font-size: 9.4px;
}
.proc-title{
    margin-top: 6px;
}
.head-ic{
    width: 14px;
    height: 14px;
    margin-right: 2px;
    flex-shrink: 0;
}
.grip{
    flex: 1;
    height: 6px;
    margin: 0 3px;
    position: relative;
    background: linear-gradient(#999 1px, #f0f0f0 1px, #f0f0f0 2px, #dcdcdc 2px, #dcdcdc 3px, #999 3px, #999 4px, #f0f0f0 4px, #f0f0f0 5px, #dcdcdc 5px);
}
.grip::after{
    content: "";
    position: absolute;
    left: 50%;
    top: 0;
    width: 22px;
    height: 6px;
    margin-left: -11px;
    background: #dcdcdc repeating-linear-gradient(90deg, #777 0 1px, #eee 1px 2px);
}
.winbtn{
    width: 11px;
    height: 12px;
    margin-left: 1px;
    background-color: #ececec;
    border: 1px solid #fff;
    border-right-color: #777;
    border-bottom-color: #777;
    color: #111;
    font-size: 10px;
    font-weight: bold;
    line-height: 10px;
    text-align: center;
    flex-shrink: 0;
}
.winbtn.small{
    font-size: 8px;
}
.col-head{
    display: flex;
    align-items: center;
    height: 15px;
    background-color: #d8d8d8;
    border: 1px solid #eee;
    border-bottom-color: #999;
    color: #333;
    font-size: 9.6px;
}
.proc-head{
    height: 14px;
}
.sortbtn{
    width: 7px;
    height: 6px;
    margin-left: 2px;
    border-top: 5px solid #555;
    border-left: 3px solid transparent;
    border-right: 3px solid transparent;
    flex-shrink: 0;
}
.h-instance{
    margin-left: 1px;
}
.h-name{
    margin-left: 2px;
    width: 117px;
}
.h-value{
    border-left: 1px solid #aaa;
    padding-left: 2px;
}
.h-type{
    border-left: 1px solid #aaa;
    padding-left: 2px;
    white-space: nowrap;
    overflow: hidden;
    width: 37px;
}

/* instance tree */
.tree{
    height: 310px;
    background-color: #fff;
    padding-top: 1px;
    border-left: 1px solid #aaa;
    overflow: hidden;
}
.tree-row{
    display: flex;
    align-items: center;
    height: 14.2px;
    padding-left: 2px;
    position: relative;
    color: #333;
    white-space: nowrap;
    font-size: 9.4px;
}
.tree-row b{
    position: absolute;
    right: 0;
    width: 3px;
    overflow: hidden;
}
.tree-row.sel{
    background-color: #e4e4e4;
}
.tree-row.lvl1{
    padding-left: 15px;
}
.tree-row.lvl2{
    padding-left: 19px;
}
.tree-row.root{
    padding-left: 14px;
}
.expander{
    width: 8px;
    height: 8px;
    margin-right: 4px;
    border: 1px solid #999;
    font-size: 8px;
    line-height: 6px;
    text-align: center;
    background-color: #fff;
    flex-shrink: 0;
}
.elbow{
    width: 8px;
    height: 1px;
    border-top: 1px dotted #888;
    flex-shrink: 0;
}
.tic{
    width: 10px;
    height: 10px;
    margin-right: 4px;
    flex-shrink: 0;
}

/* objects and processes */
.objects{
    height: 137px;
    background-color: #4f5a8c;
    padding-top: 1px;
    color: #e4e4ee;
    border: 1px solid #aaa;
    border-width: 0 1px;
    font-size: 9.4px;
}
.obj-row{
    display: flex;
    align-items: center;
    height: 14.2px;
    padding-left: 12px;
    position: relative;
}
.oic{
    width: 13px;
    height: 13px;
    margin-right: 3px;
    flex-shrink: 0;
}
.obj-row b{
    position: absolute;
    left: 129px;
}
.processes{
    height: 139px;
    background-color: #8aa4f8;
    border: 1px solid #aaa;
    border-width: 0 1px;
}

/* scrollbars */
.hscroll{
    display: flex;
    align-items: center;
    height: 11px;
    background-color: #a2a2a2;
    border-top: 1px solid #eee;
}
.track{
    flex: 1;
}
.thumb{
    height: 10px;
    background-color: #dadada;
    border: 1px solid #eee;
    border-right-color: #999;
    border-bottom-color: #999;
}
.arrow-l{
    width: 0;
    height: 0;
    margin: 0 1px;
    border-top: 4px solid transparent;
    border-bottom: 4px solid transparent;
    border-right: 7px solid #dcdcdc;
}
.arrow-r{
    width: 0;
    height: 0;
    margin: 0 1px;
    border-top: 4px solid transparent;
    border-bottom: 4px solid transparent;
    border-left: 7px solid #dcdcdc;
}
.arrow-l.dark{
    margin: 0;
    border-right-color: #444;
    border-right-width: 4px;
}
.arrow-r.dark{
    margin: 0;
    border-left-color: #444;
    border-left-width: 4px;
}
.hs-left .thumb{ width: 27px; margin-left: 1px; }
.hs-obj{ margin-top: 2px; }
.hs-obj .thumb{ width: 60px; margin-left: 1px; }
.hs-proc{ margin-top: 2px; }
.hs-proc .thumb{ width: 43px; margin-left: 1px; }
.hs-names .thumb{ width: 108px; margin-left: 1px; }
.hs-vals .thumb{ width: 56px; }
.hs-wave .track{ flex: 0 0 283px; }
.hs-wave .track.tail{ flex: 1; }
.hs-wave .thumb{ width: 8px; }

/* tabs */
.tabs{
    display: flex;
    align-items: center;
    height: 17px;
    color: #444;
    font-size: 9.4px;
}
.tab{
    display: flex;
    align-items: center;
    height: 16px;
    padding: 0 3px;
    background-color: #c4c4c4;
    border: 1px solid #999;
    border-top-color: #eee;
    border-radius: 0 0 3px 3px;
    white-space: nowrap;
}
.tab.on{
    background-color: #e4e4e4;
    color: #111;
}
.tab em{
    margin-left: 6px;
    color: #aaa;
    font-size: 8px;
}
.tab-ic{
    width: 14px;
    height: 14px;
    margin-right: 3px;
}
.tab-arrows{
    display: flex;
    margin-left: auto;
    gap: 1px;
}
.tab-btn{
    display: flex;
    align-items: center;
    justify-content: center;
    width: 8px;
    height: 13px;
    background-color: #eee;
    border: 1px solid #f8f8f8;
    border-right-color: #999;
    border-bottom-color: #999;
}
.tab-arrows.far{
    margin-right: 1px;
}
.tab-arrows.far .tab-btn{
    width: 9px;
}

/* wave window */
.wave-title{
    display: flex;
    align-items: center;
    height: 16px;
    padding-right: 2px;
    background-color: #5468ab;
    color: #e8e8f4;
    white-space: nowrap;
    font-size: 9.4px;
}
.wave-title .grip{
    background: linear-gradient(#b0b8e0 1px, #5468ab 1px, #5468ab 2px, #3c4c90 2px, #3c4c90 3px, #b0b8e0 3px, #b0b8e0 4px, #5468ab 4px);
}
.wave-title .grip::after{
    left: 0;
    width: 15px;
    margin-left: 285px;
    background: #5468ab repeating-linear-gradient(90deg, #334 0 1px, #b0b8e0 1px 2px);
}
.wave-grid{
    display: grid;
    grid-template-columns: 172px 77px 443px 16px;
    grid-template-rows: 17px 268px 20px 16px 11px;
    background-color: #7f7f7f;
    height: 334px;
    border-bottom: 2px solid #e8e8e8;
    color: #eee;
}
.w-head{
    background-color: #7f7f7f;
    border-right: 2px solid #e8e8e8;
    border-bottom: 2px solid #e8e8e8;
    display: flex;
    align-items: center;
}
.wave-sel{
    margin-left: 11px;
}
.w-msgs{
    justify-content: flex-end;
    padding-right: 3px;
    color: #ddd;
}
.wave-canvas{
    grid-column: 3;
    grid-row: 1 / 5;
    background-color: #000;
}
.clk{
    fill: none;
    stroke: #00c000;
    stroke-width: 1.5;
}
.wave-num{
    fill: #00d020;
    font-size: 10px;
}
.wave-cur{
    fill: #e09010;
    font-size: 10px;
    letter-spacing: .1px;
}
.v-scroll{
    grid-column: 4;
    grid-row: 1 / 6;
    display: flex;
    flex-direction: column;
    align-items: center;
    background-color: #8c8c8c;
    border-left: 1px solid #ddd;
}
.v-top{
    width: 100%;
    height: 15px;
    background-color: #7f7f7f;
    border-bottom: 2px solid #ddd;
    flex-shrink: 0;
}
.v-up{
    width: 0;
    height: 0;
    margin-top: 2px;
    border-left: 5px solid transparent;
    border-right: 5px solid transparent;
    border-bottom: 9px solid #e8e8e8;
    flex-shrink: 0;
}
.v-thumb{
    width: 13px;
    height: 15px;
    margin-top: 27px;
    background-color: #fff;
    flex-shrink: 0;
}
.v-down{
    width: 0;
    height: 0;
    margin-top: 210px;
    border-left: 5px solid transparent;
    border-right: 5px solid transparent;
    border-top: 9px solid #e8e8e8;
    flex-shrink: 0;
}
.v-bottom{
    width: 100%;
    height: 12px;
    margin-top: auto;
    background-color: #666;
}
.w-names, .w-values{
    background-color: #7f7f7f;
    border-right: 2px solid #e8e8e8;
    padding-top: 1px;
}
.w-names{
    grid-column: 1;
    grid-row: 2;
    border-left: 5px solid #e8e8e8;
    margin-left: 3px;
}
.w-values{
    grid-column: 2;
    grid-row: 2;
}
.w-row{
    display: flex;
    align-items: center;
    height: 14px;
    padding-left: 2px;
    white-space: nowrap;
    overflow: hidden;
}
.w-names .w-row{
    padding-left: 16px;
}
.w-row.sel{
    background-color: #fff;
    color: #111;
}
.w-row.last{
    border-bottom: 1px solid #444;
    height: 15px;
}
.wdia{
    width: 12px;
    height: 12px;
    margin-right: 3px;
    margin-left: -1px;
    flex-shrink: 0;
}
.w-now{
    grid-column: 1;
    grid-row: 3;
    display: flex;
    align-items: center;
    border-top: 2px solid #e8e8e8;
    border-right: 2px solid #e8e8e8;
    padding-left: 8px;
    color: #ddd;
}
.w-now span{
    margin-left: auto;
    padding-right: 7px;
}
.w-now.w-val{
    grid-column: 2;
    padding: 0;
}
.w-now.w-val span{
    padding-right: 5px;
}
.mini{
    width: 10px;
    height: 10px;
    margin-right: 1px;
    flex-shrink: 0;
}
.w-cursor{
    grid-column: 1;
    grid-row: 4;
    display: flex;
    align-items: center;
    padding-left: 8px;
    border-right: 2px solid #e8e8e8;
}
.cursor-name{
    display: block;
    height: 100%;
    line-height: 16px;
    background-color: #fff;
    color: #222;
    text-align: right;
    padding-right: 7px;
}
.w-cursor .cursor-name{
    flex: 1;
}
.w-cursor.w-val{
    grid-column: 2;
    padding-left: 0;
}
.w-val .cursor-name{
    padding-right: 4px;
}
.hs-names{
    grid-column: 1;
    grid-row: 5;
    margin-left: 4px;
}
.hs-vals{
    grid-column: 2;
    grid-row: 5;
}
.hs-wave{
    grid-column: 3;
    grid-row: 5;
}
.wave-tabs{
    margin-top: 1px;
}

/* transcript */
.transcript{
    height: 77px;
    padding: 2px 2px 0;
}
.trans-title{
    display: flex;
    align-items: center;
    height: 14px;
    color: #555;
    font-size: 9.4px;
}
.trans-title .grip{
    margin-right: 0;
}
.trans-title .grip::after{
    margin-left: -31px;
}
.trans-body{
    height: 57px;
    margin-left: 2px;
    background-color: #fff;
    border: 1px solid #888;
    border-right-color: #eee;
    border-bottom-color: #eee;
    padding: 2px 0 0 2px;
    color: #223388;
    overflow: hidden;
    font-size: 9.4px;
}
.trans-body p{
    height: 13px;
    line-height: 13px;
}
.trans-body code{
    font-family: "Liberation Serif", serif;
    font-size: 8px;
    color: #444;
    letter-spacing: .6px;
}
.trans-body .prompt{
    margin-top: 8px;
    margin-left: -1px;
}

/* status bar */
.statusbar{
    display: flex;
    height: 18px;
    align-items: center;
    padding: 1px 0 1px 3px;
    color: #444;
}
.statusbar span{
    height: 16px;
    line-height: 14px;
    border: 1px solid #f2f2f2;
    border-left-color: #999;
    border-top-color: #aaa;
    white-space: nowrap;
    overflow: hidden;
}
.st-range{
    width: 146px;
    padding-left: 5px;
    margin-right: 4px;
}
.st-project{
    width: 63px;
    padding-left: 2px;
    margin-right: 1px;
}
.st-now{
    width: 177px;
    padding-left: 4px;
    margin-right: 1px;
}
.st-path{
    flex: 1;
    padding-left: 3px;
}

/* annotation */
.note-arrow{
    position: absolute;
    left: 798px;
    top: 69px;
}
.note{
    position: absolute;
    left: 827px;
    top: 77px;
    font-family: "DejaVu Sans", sans-serif;
    font-size: 12.8px;
    color: #222;
}
```
